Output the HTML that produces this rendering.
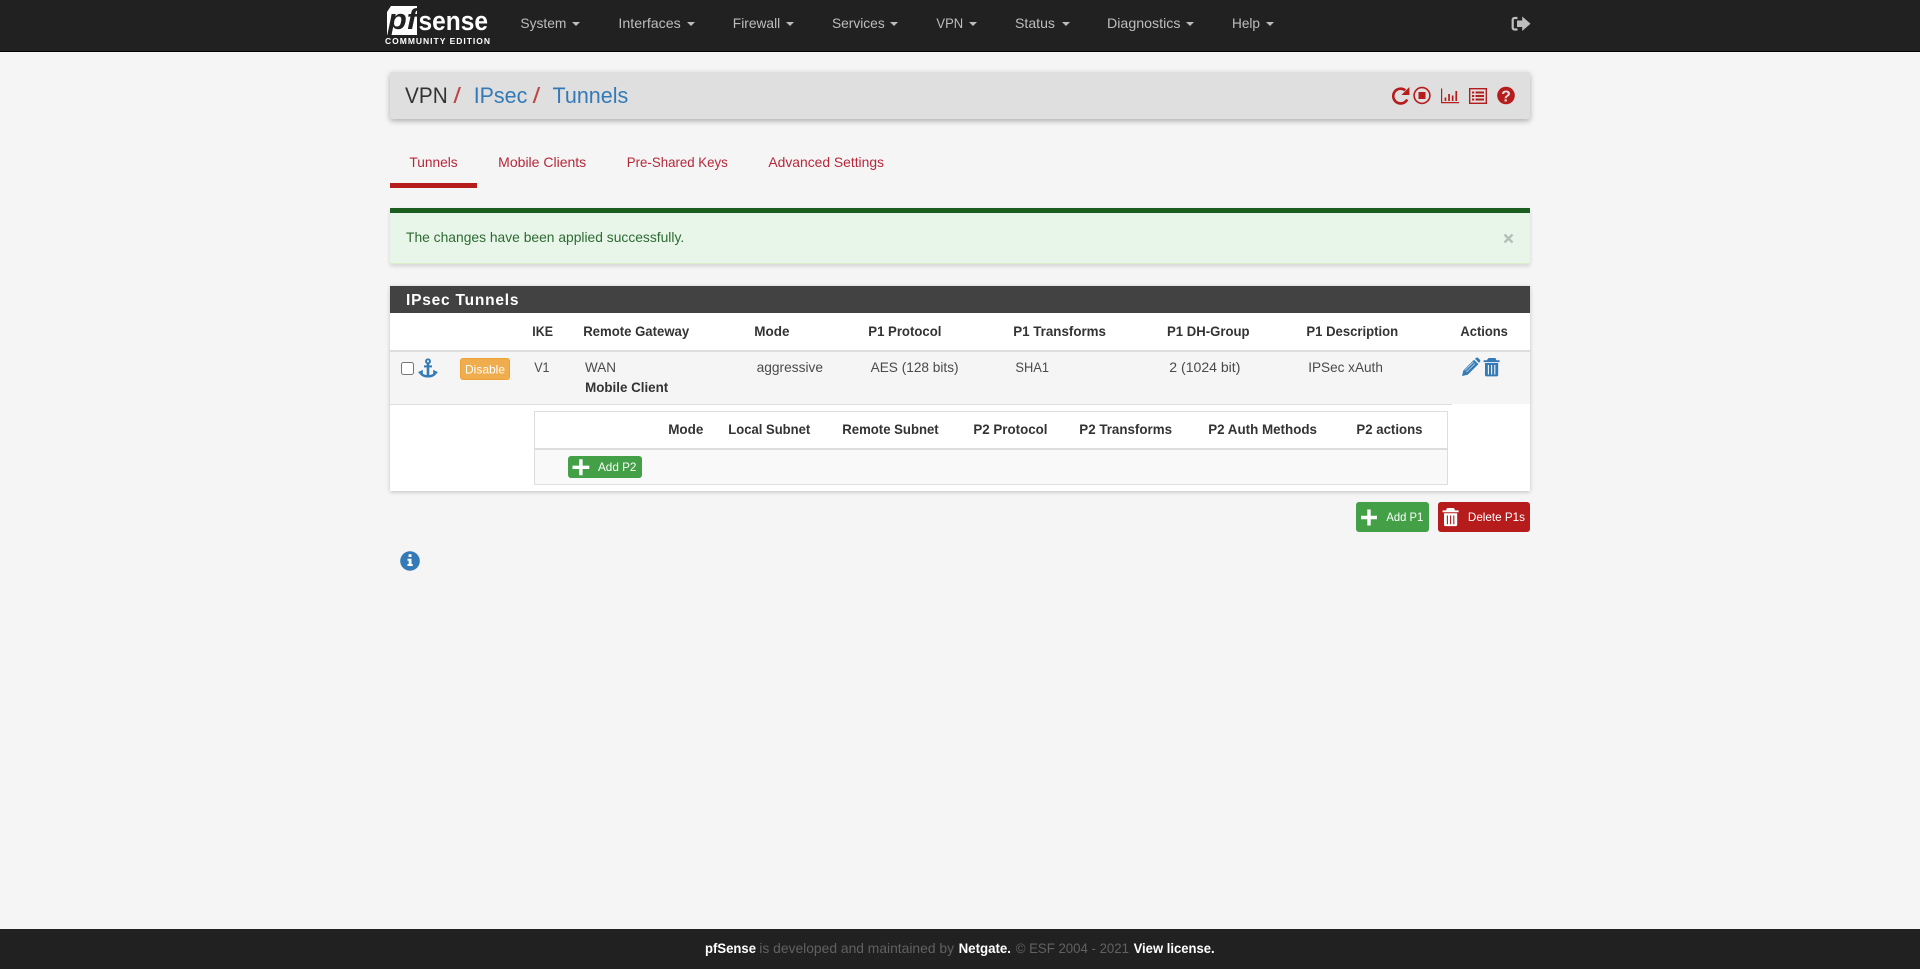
<!DOCTYPE html>
<html lang="en">
<head>
<meta charset="utf-8">
<title>VPN / IPsec / Tunnels</title>
<style>
html,body{margin:0;padding:0;width:1920px;height:969px;overflow:hidden;background:#f5f5f5;font-family:"Liberation Sans",sans-serif}
.b{position:absolute;box-sizing:border-box}
svg{position:absolute;left:0;top:0}
text{font-family:"Liberation Sans",sans-serif;font-size:14px}
.nav{fill:#bdbdbd}
.car{fill:#bdbdbd}
.th{font-weight:bold;fill:#333}
.td{fill:#4a4a4a}
.tab{fill:#b5283a}
.bt{fill:#fff;font-size:12px}
.fg{fill:#616161;font-size:14px}
.fw{fill:#fff;font-weight:bold;font-size:14px}
</style>
</head>
<body>
<div class="b" style="left:0;top:0;width:1920px;height:52px;background:#212121;border-bottom:1px solid #000"></div>
<div class="b" style="left:390px;top:72px;width:1140px;height:47px;background:#dfdfdf;border-radius:2px;box-shadow:0 2px 6px rgba(0,0,0,.3)"></div>
<div class="b" style="left:390px;top:183px;width:87px;height:5px;background:#b71c1c"></div>
<div class="b" style="left:390px;top:208px;width:1140px;height:56px;background:#e8f5e9;border-top:5px solid #1b5e20;border-bottom:1px solid #dcedc8;box-shadow:0 2px 4px rgba(0,0,0,.14)"></div>
<div class="b" style="left:390px;top:286px;width:1140px;height:205px;background:#fff;box-shadow:0 1px 4px rgba(0,0,0,.22)"></div>
<div class="b" style="left:390px;top:286px;width:1140px;height:27px;background:#424242"></div>
<div class="b" style="left:390px;top:350px;width:1140px;height:2px;background:#ddd"></div>
<div class="b" style="left:390px;top:352px;width:1140px;height:52px;background:#f5f5f5"></div>
<div class="b" style="left:390px;top:404px;width:1062px;height:1px;background:#ddd"></div>
<div class="b" style="left:534px;top:411px;width:914px;height:74px;background:#fff;border:1px solid #ddd"></div>
<div class="b" style="left:535px;top:448px;width:912px;height:2px;background:#ddd"></div>
<div class="b" style="left:535px;top:450px;width:912px;height:34px;background:#f9f9f9"></div>
<div class="b" style="left:568px;top:456px;width:74px;height:22px;background:#43a047;border-radius:3px"></div>
<div class="b" style="left:460px;top:358px;width:50px;height:22px;background:#f0ad4e;border-radius:3px;border:1px solid #eea236"></div>
<div class="b" style="left:1356px;top:502px;width:73px;height:30px;background:#43a047;border-radius:3px"></div>
<div class="b" style="left:1438px;top:502px;width:92px;height:30px;background:#b71c1c;border-radius:3px"></div>
<div class="b" style="left:0;top:929px;width:1920px;height:40px;background:#212121"></div>
<input type="checkbox" class="b" style="left:401px;top:362px;width:13px;height:13px;margin:0">

<svg width="1920" height="969" viewBox="0 0 1920 969" xmlns="http://www.w3.org/2000/svg">
<!-- logo -->
<polygon points="391,6 417,6 417,35 387,35 387,12" fill="#fff"/>
<text x="388" y="29" textLength="29" lengthAdjust="spacingAndGlyphs" style="font-size:29px;font-weight:bold;font-style:italic;fill:#212121">pf</text>
<text x="418.5" y="30" textLength="69.5" lengthAdjust="spacingAndGlyphs" style="font-size:27px;font-weight:bold;fill:#fff">sense</text>
<text x="385" y="44" textLength="105" lengthAdjust="spacing" style="font-size:8.5px;font-weight:bold;fill:#fff">COMMUNITY EDITION</text>

<!-- nav -->
<text class="nav" x="520.4" y="28" textLength="46" lengthAdjust="spacingAndGlyphs">System</text>
<polygon class="car" points="572,22 580,22 576,26"/>
<text class="nav" x="618.4" y="28" textLength="62.4" lengthAdjust="spacingAndGlyphs">Interfaces</text>
<polygon class="car" points="687,22 695,22 691,26"/>
<text class="nav" x="732.8" y="28" textLength="47.4" lengthAdjust="spacingAndGlyphs">Firewall</text>
<polygon class="car" points="786,22 794,22 790,26"/>
<text class="nav" x="832" y="28" textLength="52.7" lengthAdjust="spacingAndGlyphs">Services</text>
<polygon class="car" points="890,22 898,22 894,26"/>
<text class="nav" x="936.4" y="28" textLength="26.8" lengthAdjust="spacingAndGlyphs">VPN</text>
<polygon class="car" points="969,22 977,22 973,26"/>
<text class="nav" x="1015" y="28" textLength="40" lengthAdjust="spacingAndGlyphs">Status</text>
<polygon class="car" points="1062,22 1070,22 1066,26"/>
<text class="nav" x="1107" y="28" textLength="73.5" lengthAdjust="spacingAndGlyphs">Diagnostics</text>
<polygon class="car" points="1186,22 1194,22 1190,26"/>
<text class="nav" x="1232" y="28" textLength="28" lengthAdjust="spacingAndGlyphs">Help</text>
<polygon class="car" points="1266,22 1274,22 1270,26"/>
<!-- sign out -->
<path d="M1517.5 18h-3a1.8 1.8 0 0 0-1.8 1.8v7.9a1.8 1.8 0 0 0 1.8 1.8h3" fill="none" stroke="#bdbdbd" stroke-width="2.2"/>
<path d="M1517 20.5h5.2v-4l8.3 7.2-8.3 7.3v-4H1517z" fill="#bdbdbd"/>

<!-- breadcrumb -->
<text x="405" y="103" textLength="42.7" lengthAdjust="spacingAndGlyphs" style="font-size:22px;fill:#333">VPN</text>
<text x="453.4" y="103" textLength="7.6" lengthAdjust="spacingAndGlyphs" style="font-size:22px;fill:#b71c1c;fill-opacity:.8">/</text>
<text x="473.7" y="103" textLength="53.6" lengthAdjust="spacingAndGlyphs" style="font-size:22px;fill:#337ab7">IPsec</text>
<text x="532.6" y="103" textLength="7.6" lengthAdjust="spacingAndGlyphs" style="font-size:22px;fill:#b71c1c;fill-opacity:.8">/</text>
<text x="552.5" y="103" textLength="75.8" lengthAdjust="spacingAndGlyphs" style="font-size:22px;fill:#337ab7">Tunnels</text>

<!-- title icons -->
<g fill="#b71c1c" stroke="none">
<path d="M1407.2 99.5A7.4 7.4 0 1 1 1405.3 90.3" fill="none" stroke="#b71c1c" stroke-width="2.6"/>
<polygon points="1409.4,87 1409.4,95 1401.4,95"/>
<circle cx="1422" cy="95.5" r="7.9" fill="none" stroke="#b71c1c" stroke-width="1.6"/>
<rect x="1418.5" y="92" width="7" height="7"/>
<path d="M1441 88.5h1.2V102h16.8v1.2H1441z"/>
<rect x="1444.6" y="97.5" width="1.7" height="3.5"/>
<rect x="1448.2" y="94" width="1.7" height="7"/>
<rect x="1451.8" y="95.5" width="1.7" height="5.5"/>
<rect x="1455.4" y="91" width="1.7" height="10"/>
<rect x="1469.7" y="88.7" width="16.6" height="14.6" fill="none" stroke="#b71c1c" stroke-width="1.4"/>
<rect x="1472" y="91.5" width="2.2" height="2"/><rect x="1475.5" y="91.5" width="8.5" height="2"/>
<rect x="1472" y="95" width="2.2" height="2"/><rect x="1475.5" y="95" width="8.5" height="2"/>
<rect x="1472" y="98.5" width="2.2" height="2"/><rect x="1475.5" y="98.5" width="8.5" height="2"/>
<circle cx="1506" cy="95.5" r="8.8"/>
</g>
<text x="1506" y="101.3" text-anchor="middle" style="font-size:16px;font-weight:bold;fill:#dfdfdf">?</text>

<!-- tabs -->
<text class="tab" x="409.4" y="167" textLength="48.2" lengthAdjust="spacingAndGlyphs">Tunnels</text>
<text class="tab" x="498.2" y="167" textLength="88" lengthAdjust="spacingAndGlyphs">Mobile Clients</text>
<text class="tab" x="626.8" y="167" textLength="101" lengthAdjust="spacingAndGlyphs">Pre-Shared Keys</text>
<text class="tab" x="768.4" y="167" textLength="115.6" lengthAdjust="spacingAndGlyphs">Advanced Settings</text>

<!-- alert -->
<text x="406" y="242" textLength="278.2" lengthAdjust="spacingAndGlyphs" style="fill:#2e6b33">The changes have been applied successfully.</text>
<path d="M1504.5 234.5l8 8M1512.5 234.5l-8 8" stroke="#b4c0b6" stroke-width="2.3" fill="none"/>

<!-- panel heading -->
<text x="406" y="305" textLength="112.5" lengthAdjust="spacing" style="font-size:15.5px;font-weight:bold;fill:#fff">IPsec Tunnels</text>

<!-- table head -->
<text class="th" x="532.3" y="336" textLength="20.7" lengthAdjust="spacingAndGlyphs">IKE</text>
<text class="th" x="583.2" y="336" textLength="106" lengthAdjust="spacingAndGlyphs">Remote Gateway</text>
<text class="th" x="754.3" y="336" textLength="35.2" lengthAdjust="spacingAndGlyphs">Mode</text>
<text class="th" x="868.3" y="336" textLength="73.1" lengthAdjust="spacingAndGlyphs">P1 Protocol</text>
<text class="th" x="1013.2" y="336" textLength="92.8" lengthAdjust="spacingAndGlyphs">P1 Transforms</text>
<text class="th" x="1167" y="336" textLength="82.6" lengthAdjust="spacingAndGlyphs">P1 DH-Group</text>
<text class="th" x="1306.4" y="336" textLength="91.8" lengthAdjust="spacingAndGlyphs">P1 Description</text>
<text class="th" x="1460.4" y="336" textLength="47.5" lengthAdjust="spacingAndGlyphs">Actions</text>

<!-- row -->
<text class="td" x="534.2" y="372" textLength="15.3" lengthAdjust="spacingAndGlyphs">V1</text>
<text class="td" x="585" y="372" textLength="31" lengthAdjust="spacingAndGlyphs">WAN</text>
<text class="th" x="585.1" y="392" textLength="83.1" lengthAdjust="spacingAndGlyphs">Mobile Client</text>
<text class="td" x="756.6" y="372" textLength="66.4" lengthAdjust="spacingAndGlyphs">aggressive</text>
<text class="td" x="870.6" y="372" textLength="88" lengthAdjust="spacingAndGlyphs">AES (128 bits)</text>
<text class="td" x="1015.4" y="372" textLength="33.6" lengthAdjust="spacingAndGlyphs">SHA1</text>
<text class="td" x="1169.3" y="372" textLength="71.1" lengthAdjust="spacingAndGlyphs">2 (1024 bit)</text>
<text class="td" x="1308.2" y="372" textLength="74.7" lengthAdjust="spacingAndGlyphs">IPSec xAuth</text>

<!-- anchor -->
<g fill="none" stroke="#337ab7">
<circle cx="428" cy="361.3" r="2" stroke-width="1.9"/>
<path d="M428 363.5V376" stroke-width="2.6"/>
<path d="M424 366.4h8" stroke-width="2"/>
<path d="M420 371.3c.6 3.3 4 5 8 5s7.4-1.7 8-5" stroke-width="2.5"/>
</g>
<polygon points="418,372.8 422.8,369.6 422.8,374.8" fill="#337ab7"/>
<polygon points="438,372.8 433.2,369.6 433.2,374.8" fill="#337ab7"/>
<text class="bt" x="465" y="373.5" textLength="40" lengthAdjust="spacingAndGlyphs">Disable</text>

<!-- pencil -->
<path d="M1462 376l1.4-5.6 10.6-10.7 4.4 4.4-10.7 10.6z" fill="#337ab7"/>
<path d="M1475 358.8l1-.8c.7-.6 1.6-.6 2.2 0l1.7 1.7c.6.6.6 1.5 0 2.2l-.9 1z" fill="#337ab7"/>
<path d="M1464.8 370.6l8.6-8.6M1466.4 372.2l8.6-8.6" stroke="#f5f5f5" stroke-width=".6" fill="none"/>
<!-- trash blue -->
<g fill="#337ab7">
<path d="M1488.5 358h7l.9 2.3h3.2v1.8h-16v-1.8h3.2z"/>
<path d="M1485 363h13.2v12c0 .8-.6 1.4-1.4 1.4h-10.4c-.8 0-1.4-.6-1.4-1.4z"/>
</g>
<path d="M1488.4 365v9.5M1491.6 365v9.5M1494.8 365v9.5" stroke="#f5f5f5" stroke-width="1.1"/>

<!-- sub head -->
<text class="th" x="668.2" y="434" textLength="35.2" lengthAdjust="spacingAndGlyphs">Mode</text>
<text class="th" x="728.3" y="434" textLength="81.9" lengthAdjust="spacingAndGlyphs">Local Subnet</text>
<text class="th" x="842.3" y="434" textLength="96.4" lengthAdjust="spacingAndGlyphs">Remote Subnet</text>
<text class="th" x="973.4" y="434" textLength="74.1" lengthAdjust="spacingAndGlyphs">P2 Protocol</text>
<text class="th" x="1079.3" y="434" textLength="92.7" lengthAdjust="spacingAndGlyphs">P2 Transforms</text>
<text class="th" x="1208.2" y="434" textLength="108.8" lengthAdjust="spacingAndGlyphs">P2 Auth Methods</text>
<text class="th" x="1356.4" y="434" textLength="66.1" lengthAdjust="spacingAndGlyphs">P2 actions</text>

<!-- add p2 -->
<path d="M572.5 467.3h16.8M580.9 459.3v16" stroke="#fff" stroke-width="3.4"/>
<text class="bt" x="598" y="471" textLength="38.4" lengthAdjust="spacingAndGlyphs">Add P2</text>

<!-- add p1 -->
<path d="M1361 517.5h16M1369 509.5v16" stroke="#fff" stroke-width="3.4"/>
<text class="bt" x="1386.4" y="521" textLength="36.8" lengthAdjust="spacingAndGlyphs">Add P1</text>

<!-- delete -->
<g fill="#fff">
<path d="M1447 508h7l1 2.4h3.6v1.9h-16v-1.9h3.4z"/>
<path d="M1444 513.3h13.2v11.4c0 .8-.6 1.4-1.4 1.4h-10.4c-.8 0-1.4-.6-1.4-1.4z"/>
</g>
<path d="M1447.4 515.5v8.7M1450.6 515.5v8.7M1453.8 515.5v8.7" stroke="#b71c1c" stroke-width="1.1"/>
<text class="bt" x="1467.9" y="521" textLength="57.1" lengthAdjust="spacingAndGlyphs">Delete P1s</text>

<!-- info -->
<circle cx="410" cy="561" r="9.8" fill="#337ab7"/>
<path d="M408.6 554.2h2.9v2.8h-2.9zM407.5 558.7h4v5.3h1.2v2h-5.2v-2h1.2v-3.3h-1.2z" fill="#fff"/>

<!-- footer -->
<text class="fw" x="705" y="953" textLength="51" lengthAdjust="spacingAndGlyphs">pfSense</text>
<text class="fg" x="759.3" y="953" textLength="194.7" lengthAdjust="spacingAndGlyphs">is developed and maintained by</text>
<text class="fw" x="958.6" y="953" textLength="52.4" lengthAdjust="spacingAndGlyphs">Netgate.</text>
<text class="fg" x="1015.7" y="953" textLength="113.3" lengthAdjust="spacingAndGlyphs">© ESF 2004 - 2021</text>
<text class="fw" x="1133.6" y="953" textLength="81" lengthAdjust="spacingAndGlyphs">View license.</text>
</svg>
</body>
</html>
